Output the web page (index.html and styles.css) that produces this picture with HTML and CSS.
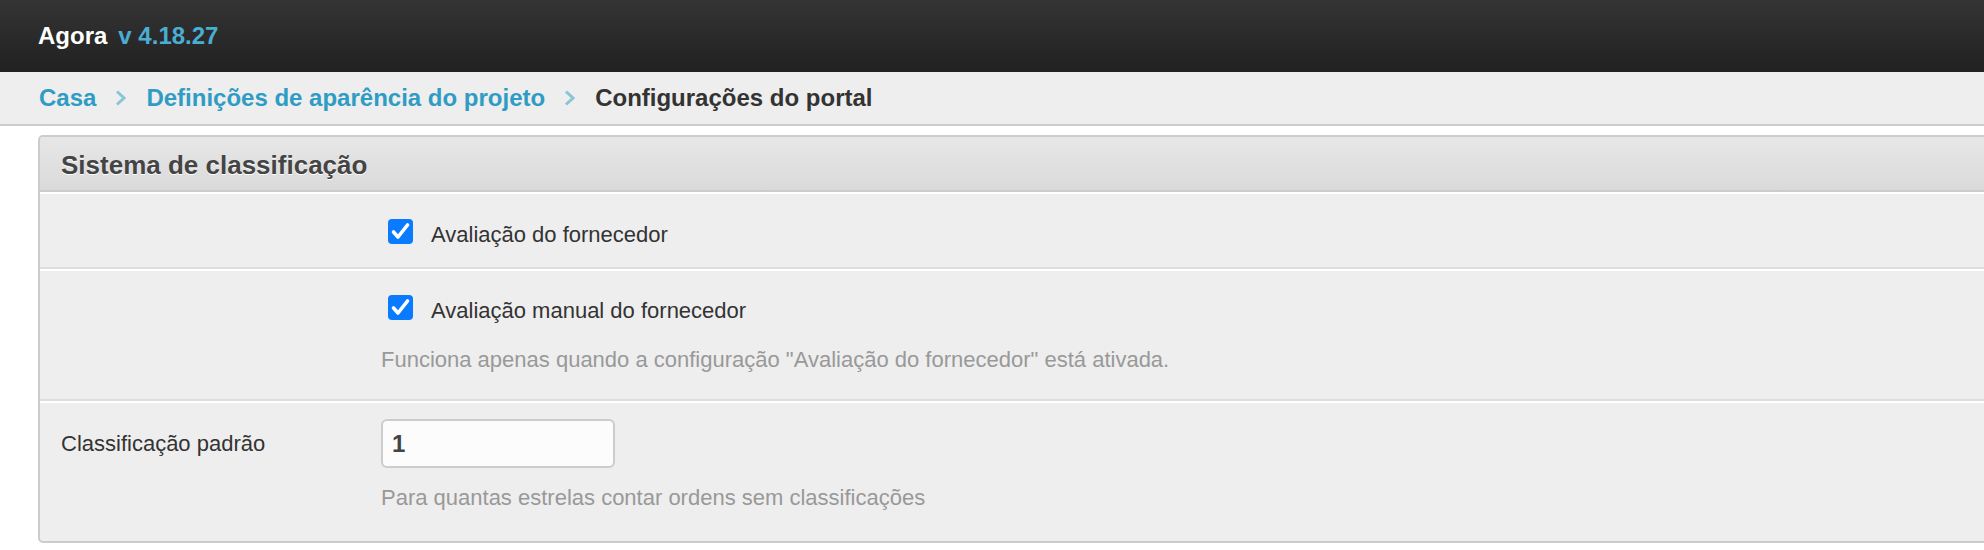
FILE: index.html
```html
<!DOCTYPE html>
<html>
<head>
    <meta charset="UTF-8">
    <meta name="viewport" content="width=device-width, initial-scale=1.0">
    <title>Agora - Configurações do portal</title>
    <link rel="stylesheet" href="styles.css">
</head>
<body>

<div class="topbar">
    <span class="brand">Agora</span><span class="version">v 4.18.27</span>
</div>

<div class="breadcrumb">
    <a href="#">Casa</a>
    <svg class="sep" width="11" height="16" viewBox="0 0 11 16"><polyline points="2,1.5 9,8 2,14.5" fill="none" stroke="#8cc4d8" stroke-width="3"/></svg>
    <a href="#">Definições de aparência do projeto</a>
    <svg class="sep" width="11" height="16" viewBox="0 0 11 16"><polyline points="2,1.5 9,8 2,14.5" fill="none" stroke="#8cc4d8" stroke-width="3"/></svg>
    <span class="current">Configurações do portal</span>
</div>

<div class="panel">
    <div class="panel-head">Sistema de classificação</div>

    <div class="row row-first">
        <div class="row-label"></div>
        <div class="row-control">
            <label class="check">
                <span class="box"><svg width="25" height="25" viewBox="0 0 25 25"><polyline points="5.5,13 10,18 19.5,6" fill="none" stroke="#fff" stroke-width="3.6" stroke-linecap="round" stroke-linejoin="round"/></svg></span>
                <span class="check-text">Avaliação do fornecedor</span>
            </label>
        </div>
    </div>

    <div class="row row-second">
        <div class="row-label"></div>
        <div class="row-control">
            <label class="check">
                <span class="box"><svg width="25" height="25" viewBox="0 0 25 25"><polyline points="5.5,13 10,18 19.5,6" fill="none" stroke="#fff" stroke-width="3.6" stroke-linecap="round" stroke-linejoin="round"/></svg></span>
                <span class="check-text">Avaliação manual do fornecedor</span>
            </label>
            <p class="help">Funciona apenas quando a configuração "Avaliação do fornecedor" está ativada.</p>
        </div>
    </div>

    <div class="row row-last">
        <div class="row-label field-label">Classificação padrão</div>
        <div class="row-control">
            <input type="text" class="field" value="1">
            <p class="help help-field">Para quantas estrelas contar ordens sem classificações</p>
        </div>
    </div>
</div>

</body>
</html>
```

FILE: styles.css
```css
html, body {
    overflow-x: hidden;
}

body {
    margin: 0;
    font-family: "Liberation Sans", Arial, sans-serif;
    background-color: #fff;
    color: #333;
}

.topbar {
    height: 72px;
    line-height: 72px;
    padding-left: 38px;
    background: linear-gradient(#343434, #212121);
    font-size: 24px;
    font-weight: bold;
}

.brand {
    color: #fff;
}

.version {
    color: #4aaed4;
    margin-left: 11px;
}

.breadcrumb {
    display: flex;
    align-items: center;
    height: 52px;
    padding-left: 39px;
    background-color: #eee;
    border-bottom: 2px solid #ccc;
    font-size: 24px;
    font-weight: bold;
}

.breadcrumb a {
    color: #2f9cc4;
    text-decoration: none;
}

.breadcrumb .sep {
    margin: 0 20px 0 19px;
}

.breadcrumb .current {
    color: #333;
}

.panel {
    margin: 9px -20px 0 38px;
    background-color: #eee;
    border: 2px solid #ccc;
    border-radius: 5px;
}

.panel-head {
    height: 50px;
    line-height: 50px;
    padding: 3px 21px 0;
    background: linear-gradient(#e7e7e7, #dadada);
    border-bottom: 2px solid #ccc;
    border-radius: 4px 4px 0 0;
    font-size: 26px;
    font-weight: bold;
    color: #444;
    text-shadow: 0 1px 0 #fff;
}

.row {
    display: flex;
    padding: 0 20px 0 21px;
    border-top: 2px solid #fff;
    border-bottom: 2px solid #ddd;
    font-size: 22px;
}

.row-first {
    padding-top: 25px;
    padding-bottom: 23px;
}

.row-second {
    padding-top: 24px;
    padding-bottom: 26px;
}

.row-last {
    padding-top: 16px;
    padding-bottom: 30px;
    border-bottom: none;
}

.row-label {
    width: 320px;
    flex-shrink: 0;
}

.field-label {
    line-height: 49px;
    color: #333;
}

.row-control {
    flex: 1;
}

.check {
    display: flex;
    align-items: center;
    height: 25px;
    padding-left: 7px;
    color: #333;
}

.check-text {
    padding-top: 6px;
}

.box {
    display: inline-block;
    width: 25px;
    height: 25px;
    margin-right: 18px;
    background-color: #0a7bff;
    border-radius: 4px;
}

.box svg {
    display: block;
}

.help {
    margin: 27px 0 0;
    line-height: 26px;
    color: #999;
}

.help-field {
    margin-top: 17px;
}

.field {
    display: block;
    box-sizing: border-box;
    width: 234px;
    height: 49px;
    margin: 0;
    padding: 0 9px;
    background-color: #fcfcfc;
    border: 2px solid #ccc;
    border-radius: 6px;
    font-family: "Liberation Sans", Arial, sans-serif;
    font-size: 24px;
    font-weight: bold;
    color: #444;
}
```
